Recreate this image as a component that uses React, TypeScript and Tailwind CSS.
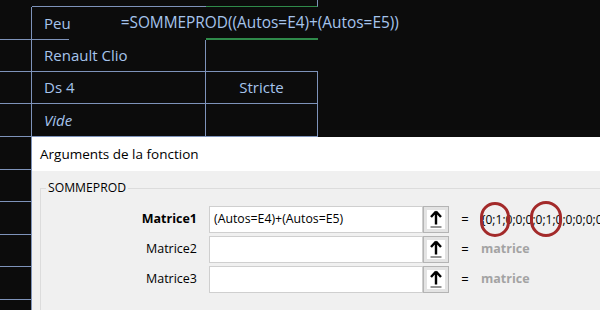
import type { ReactNode } from 'react'

const LINE = 'border-[#7e93ba]'

// ── Sheet cells ────────────────────────────────────────────────────────────

function RowHead({ h }: { h: string }) {
  return <div className={`w-[32px] shrink-0 border-r border-b ${LINE} ${h}`} />
}

function Cell({ children, className = '' }: { children?: ReactNode; className?: string }) {
  return (
    <div className={`flex items-center text-[15px] text-[#a6c4ec] whitespace-nowrap ${className}`}>
      {children}
    </div>
  )
}

function UpButton() {
  return (
    <div className="w-[26px] h-full shrink-0 border border-[#b4b4b4] bg-[#e3e3e3] p-[3px]">
      <div className="w-full h-full bg-white flex items-center justify-center">
        <svg width="14" height="19" viewBox="0 0 14 19">
          <path d="M7 1.5 L2 7 M7 1.5 L12 7 M7 2 V14.5" stroke="#000" strokeWidth="2.4" fill="none" />
          <path d="M1.5 17 H12.5" stroke="#707070" strokeWidth="1.5" />
        </svg>
      </div>
    </div>
  )
}

function ArgRow({ label, bold, value, result }: { label: string; bold?: boolean; value?: string; result: ReactNode }) {
  return (
    <div className="flex items-center h-[27px]">
      <div className={`w-[168px] pr-[12px] text-right text-[12.5px] text-black ${bold ? 'font-bold' : ''}`}>{label}</div>
      <div className="w-[214px] h-full border border-[#cfcfcf] bg-white flex items-center pl-[4px] text-[12.3px] text-black whitespace-nowrap">
        {value}
      </div>
      <UpButton />
      <div className="w-[32px] text-center text-[13px] text-black">=</div>
      {result}
    </div>
  )
}

export default function App() {
  return (
    <div className="relative w-[600px] h-[310px] overflow-hidden bg-[#0c0c0c] font-['Open_Sans','Noto_Sans',sans-serif]">
      {/* Sheet */}
      <div className="flex flex-col">
        {/* row 0 (partial) */}
        <div className="flex h-[7px]">
          <div className="w-[32px] shrink-0" />
          <div className={`w-[174px] border-b ${LINE}`} />
          <div className="w-[112px] border-b border-r border-b-[#2f8a4a] border-r-[#7e93ba]" />
        </div>

        {/* row 1 : editing cell */}
        <div className="flex h-[33px]">
          <RowHead h="h-[33px]" />
          <div className="w-[174px] flex flex-col">
            <Cell className="flex-1 pl-[12px]">
              <span>Peu</span>
              <span className="ml-[50px] text-[15.4px]">=SOMMEPROD((Autos=E4)+(Autos=E5))</span>
            </Cell>
            <div className="w-[37px] h-px bg-[#7e93ba]" />
          </div>
          <div className="w-[112px] border-b-2 border-[#2f8a4a]" />
        </div>

        {/* row 2 */}
        <div className="flex h-[32px]">
          <RowHead h="h-[32px]" />
          <Cell className={`w-[174px] pl-[12px] border-r border-b ${LINE}`}>Renault Clio</Cell>
          <div className={`w-[112px] border-b ${LINE}`} />
        </div>

        {/* row 3 */}
        <div className="flex h-[32px]">
          <RowHead h="h-[32px]" />
          <Cell className={`w-[174px] pl-[12px] border-r border-b ${LINE}`}>Ds 4</Cell>
          <Cell className={`w-[112px] justify-center border-r border-b ${LINE}`}>Stricte</Cell>
        </div>

        {/* row 4 */}
        <div className="flex h-[33px]">
          <RowHead h="h-[33px]" />
          <Cell className={`w-[174px] pl-[12px] border-r border-b ${LINE} italic text-[#9a9a9a]`}>Vide</Cell>
          <div className={`w-[112px] border-r border-b ${LINE}`} />
        </div>

        {[33, 32, 33, 32, 33, 32].map((h, i) => (
          <div key={i} className="flex">
            <RowHead h={h === 33 ? 'h-[33px]' : 'h-[32px]'} />
          </div>
        ))}
      </div>

      {/* Function arguments dialog */}
      <div className="absolute left-[32px] top-[137px] w-[600px] h-[200px] flex flex-col bg-[#f0f0f0]">
        <div className="h-[34px] bg-white flex items-center pl-[8px] text-[13.5px] text-black">
          Arguments de la fonction
        </div>
        <div className="flex-1 pl-[8px] pt-[17px]">
          <div className="relative h-full border-l border-t border-[#dcdcdc] pt-[17px]">
            <div className="absolute left-[5px] top-[-10px] px-[2px] bg-[#f0f0f0] text-[12.2px] text-black">
              SOMMEPROD
            </div>
            <div className="flex flex-col gap-[3px]">
              <ArgRow
                label="Matrice1"
                bold
                value="(Autos=E4)+(Autos=E5)"
                result={
                  <div className="relative text-[12px] text-black whitespace-nowrap">
                    {'{0;1;0;0;0;0;1;0;0;0;0;0}'}
                    <div className="absolute left-[-1px] top-[-9px] w-[30px] h-[35px] rounded-full border-[3px] border-[#a32a2a]" />
                    <div className="absolute left-[49px] top-[-10px] w-[32px] h-[36px] rounded-full border-[3px] border-[#a32a2a]" />
                  </div>
                }
              />
              <ArgRow label="Matrice2" result={<div className="text-[12.5px] font-bold text-[#a3a3a3]">matrice</div>} />
              <ArgRow label="Matrice3" result={<div className="text-[12.5px] font-bold text-[#a3a3a3]">matrice</div>} />
            </div>
          </div>
        </div>
      </div>
    </div>
  )
}
